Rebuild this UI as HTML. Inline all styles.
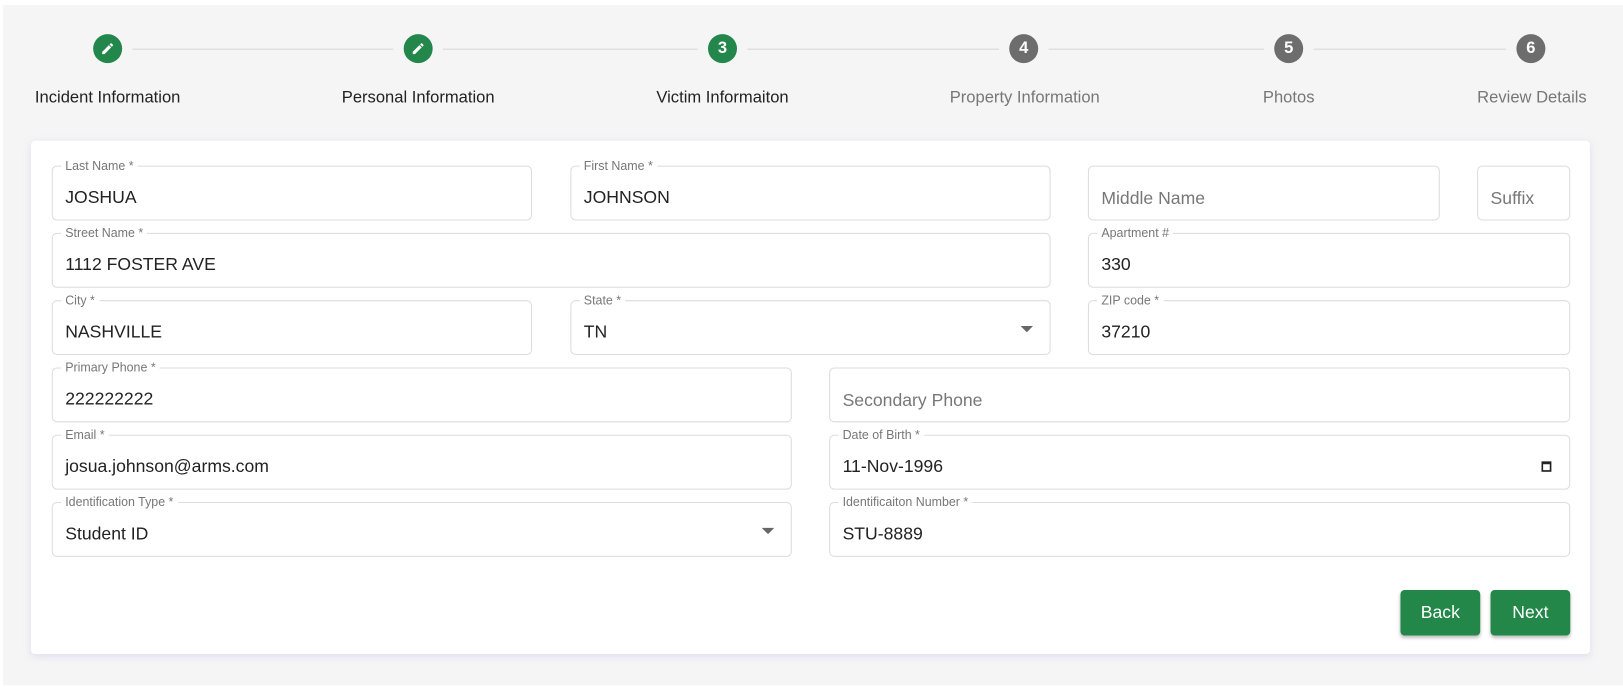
<!DOCTYPE html><html><head><style>
body{margin:0;width:1623px;height:687px;background:#fff;font-family:"Liberation Sans",Arial,sans-serif;position:relative;overflow:hidden}
#w{position:absolute;left:0;top:0;width:1568px;height:664px;transform:scale(1.0351);transform-origin:0 0}
.bg{position:absolute;left:3px;top:5px;width:1570px;height:657px;background:#f5f5f6}
.c{position:absolute;width:28px;height:28px;border-radius:50%;top:33px;color:#fff;font-size:16px;text-align:center;line-height:28px;font-weight:bold}
.g{background:#23864a}.k{background:#6d6d6d}
.ln{position:absolute;top:47px;height:1px;background:#d6d6d6}
.lb{position:absolute;top:86px;font-size:16px;transform:translateX(-50%);white-space:nowrap}
.card{position:absolute;left:30px;top:136px;width:1506px;height:496px;background:#fff;border-radius:4px;box-shadow:0 2px 6px rgba(200,200,230,.5)}
.f{position:absolute;border:1px solid #dcdcdc;border-radius:5px;box-sizing:border-box;height:53px}
.f span{position:absolute;left:8px;top:-8px;background:#fff;padding:0 4px;font-size:12px;color:#777}
.f b{position:absolute;left:12px;top:20px;font-weight:normal;font-size:17px;color:#222}
.f i{position:absolute;left:12px;top:21px;font-style:normal;font-size:17px;color:#777}
.ar{position:absolute;right:16px;top:24px;border-left:6px solid transparent;border-right:6px solid transparent;border-top:6px solid #666}
.bt{position:absolute;top:570px;width:77px;height:44px;background:#23874a;border-radius:4px;color:#fff;font-size:17px;text-align:center;line-height:44px;box-shadow:0 2px 3px rgba(0,0,0,.25)}
</style></head><body><div id="w">
<div class="bg"></div>
<div class="c g" style="left:90px"><svg width="14" height="14" viewBox="0 0 24 24" style="margin-top:7px"><path fill="#fff" d="M3 17.25V21h3.75L17.81 9.94l-3.75-3.75L3 17.25zM20.71 7.04a1 1 0 000-1.41l-2.34-2.34a1 1 0 00-1.410 0l-1.83 1.83 3.75 3.75 1.83-1.83z"/></svg></div>
<div class="c g" style="left:390px"><svg width="14" height="14" viewBox="0 0 24 24" style="margin-top:7px"><path fill="#fff" d="M3 17.25V21h3.75L17.81 9.94l-3.75-3.75L3 17.25zM20.71 7.04a1 1 0 000-1.41l-2.34-2.34a1 1 0 00-1.41 0l-1.83 1.83 3.75 3.75 1.83-1.83z"/></svg></div>
<div class="c g" style="left:684px">3</div>
<div class="c k" style="left:975px">4</div>
<div class="c k" style="left:1231px">5</div>
<div class="c k" style="left:1465px">6</div>
<div class="ln" style="left:128px;width:252px"></div>
<div class="ln" style="left:428px;width:246px"></div>
<div class="ln" style="left:722px;width:243px"></div>
<div class="ln" style="left:1013px;width:208px"></div>
<div class="ln" style="left:1269px;width:186px"></div>
<div class="lb" style="left:104px;color:#222">Incident Information</div>
<div class="lb" style="left:404px;color:#222">Personal Information</div>
<div class="lb" style="left:698px;color:#222">Victim Informaiton</div>
<div class="lb" style="left:990px;color:#777">Property Information</div>
<div class="lb" style="left:1245px;color:#777">Photos</div>
<div class="lb" style="left:1480px;color:#777">Review Details</div>
<div class="card"></div>
<div class="f" style="left:50px;top:160px;width:464px"><span>Last Name *</span><b>JOSHUA</b></div>
<div class="f" style="left:551px;top:160px;width:464px"><span>First Name *</span><b>JOHNSON</b></div>
<div class="f" style="left:1051px;top:160px;width:340px"><i>Middle Name</i></div>
<div class="f" style="left:1427px;top:160px;width:90px"><i>Suffix</i></div>
<div class="f" style="left:50px;top:225px;width:965px"><span>Street Name *</span><b>1112 FOSTER AVE</b></div>
<div class="f" style="left:1051px;top:225px;width:466px"><span>Apartment #</span><b>330</b></div>
<div class="f" style="left:50px;top:290px;width:464px"><span>City *</span><b>NASHVILLE</b></div>
<div class="f" style="left:551px;top:290px;width:464px"><span>State *</span><b>TN</b><div class="ar"></div></div>
<div class="f" style="left:1051px;top:290px;width:466px"><span>ZIP code *</span><b>37210</b></div>
<div class="f" style="left:50px;top:355px;width:715px"><span>Primary Phone *</span><b>222222222</b></div>
<div class="f" style="left:801px;top:355px;width:716px"><i>Secondary Phone</i></div>
<div class="f" style="left:50px;top:420px;width:715px"><span>Email *</span><b>josua.johnson@arms.com</b></div>
<div class="f" style="left:801px;top:420px;width:716px"><span>Date of Birth *</span><b>11-Nov-1996</b><svg style="position:absolute;right:17px;top:24px" width="10" height="11" viewBox="0 0 10 11"><rect x="1" y="1.5" width="8" height="8.5" fill="none" stroke="#222" stroke-width="1.6"/><rect x="1" y="1" width="8" height="2.5" fill="#222"/></svg></div>
<div class="f" style="left:50px;top:485px;width:715px"><span>Identification Type *</span><b>Student ID</b><div class="ar"></div></div>
<div class="f" style="left:801px;top:485px;width:716px"><span>Identificaiton Number *</span><b>STU-8889</b></div>
<div class="bt" style="left:1353px">Back</div>
<div class="bt" style="left:1440px">Next</div>
</div></body></html>
